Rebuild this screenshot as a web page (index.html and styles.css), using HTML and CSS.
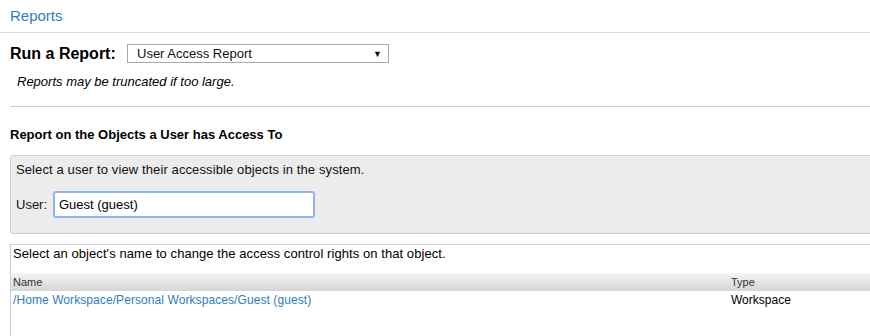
FILE: index.html
```html
<!DOCTYPE html>
<html>
<head>
<meta charset="utf-8">
<link rel="stylesheet" href="styles.css">
</head>
<body>
<div class="page">
  <div class="topbar"><span class="crumb">Reports</span></div>
  <div class="content">
    <div class="run-row">
      <label class="run-label">Run a Report:</label>
      <div class="select"><span>User Access Report</span><span class="arrow">▼</span></div>
    </div>
    <p class="note">Reports may be truncated if too large.</p>
    <div class="rule"></div>
    <h2 class="section-title">Report on the Objects a User has Access To</h2>
    <div class="panel">
      <p class="panel-text">Select a user to view their accessible objects in the system.</p>
      <div class="user-row">
        <span class="user-label">User:</span>
        <div class="user-input">Guest (guest)</div>
      </div>
    </div>
    <div class="results">
      <p class="results-text">Select an object's name to change the access control rights on that object.</p>
      <div class="table">
        <div class="thead">
          <div class="col-name">Name</div>
          <div class="col-type">Type</div>
        </div>
        <div class="trow">
          <div class="col-name"><a class="link" href="#">/Home Workspace/Personal Workspaces/Guest (guest)</a></div>
          <div class="col-type">Workspace</div>
        </div>
      </div>
    </div>
  </div>
</div>
</body>
</html>
```
FILE: styles.css
```css
html, body {
  margin: 0;
  padding: 0;
  background: #fff;
  overflow: hidden;
}
body {
  font-family: "Liberation Sans", Arial, sans-serif;
  color: #000;
  font-size: 13px;
}
.page {
  width: 890px;
}
.topbar {
  height: 33px;
  border-bottom: 1px solid #dadada;
  padding-left: 10px;
  box-sizing: border-box;
  display: flex;
  align-items: center;
}
.crumb {
  color: #2f7dbd;
  font-size: 15px;
  margin-top: -1px;
}
.content {
  padding-left: 10px;
}
.run-row {
  display: flex;
  align-items: center;
  margin-top: 11px;
  height: 19px;
}
.run-label {
  font-weight: bold;
  font-size: 16px;
  width: 117px;
}
.select {
  width: 262px;
  height: 19px;
  box-sizing: border-box;
  border: 1px solid #a9a9a9;
  display: flex;
  align-items: center;
  justify-content: space-between;
  padding: 0 6px 0 9px;
  font-size: 13px;
  color: #111;
}
.arrow {
  font-size: 9px;
}
.note {
  font-style: italic;
  margin: 11px 0 0 7px;
  line-height: 16px;
}
.rule {
  height: 1px;
  background: #cfcfcf;
  margin-top: 16px;
}
.section-title {
  font-size: 13px;
  font-weight: bold;
  margin: 20px 0 0 0;
  line-height: 16px;
}
.panel {
  margin-top: 12px;
  background: #ececec;
  border: 1px solid #cfcfcf;
  border-radius: 3px 0 0 3px;
  height: 79px;
  box-sizing: border-box;
  padding: 6px 0 0 5px;
}
.panel-text {
  margin: 0;
  line-height: 16px;
  color: #111;
  letter-spacing: 0.11px;
}
.user-row {
  display: flex;
  align-items: center;
  margin-top: 13px;
}
.user-label {
  width: 37px;
  color: #111;
}
.user-input {
  width: 262px;
  height: 27px;
  box-sizing: border-box;
  border: 2px solid #8fb4ec;
  border-radius: 3px;
  background: #fff;
  padding-left: 4px;
  font-size: 13px;
  display: flex;
  align-items: center;
}
.results {
  margin-top: 10px;
  border-top: 1px solid #cfcfcf;
  border-left: 1px solid #cfcfcf;
  height: 100px;
}
.results-text {
  margin: 0;
  padding: 1px 0 0 2px;
  line-height: 16px;
  letter-spacing: 0.07px;
}
.table {
  margin-top: 11px;
}
.thead {
  display: flex;
  height: 18px;
  align-items: center;
  background: linear-gradient(#f4f4f4, #d6d6d6);
  font-size: 11px;
  color: #333;
}
.trow {
  display: flex;
  height: 18px;
  align-items: center;
  font-size: 12px;
}
.col-name {
  width: 718px;
  padding-left: 2px;
}
.col-type {
  flex: 1;
}
.link {
  color: #2f7dbd;
  text-decoration: none;
  letter-spacing: 0.08px;
}
```
